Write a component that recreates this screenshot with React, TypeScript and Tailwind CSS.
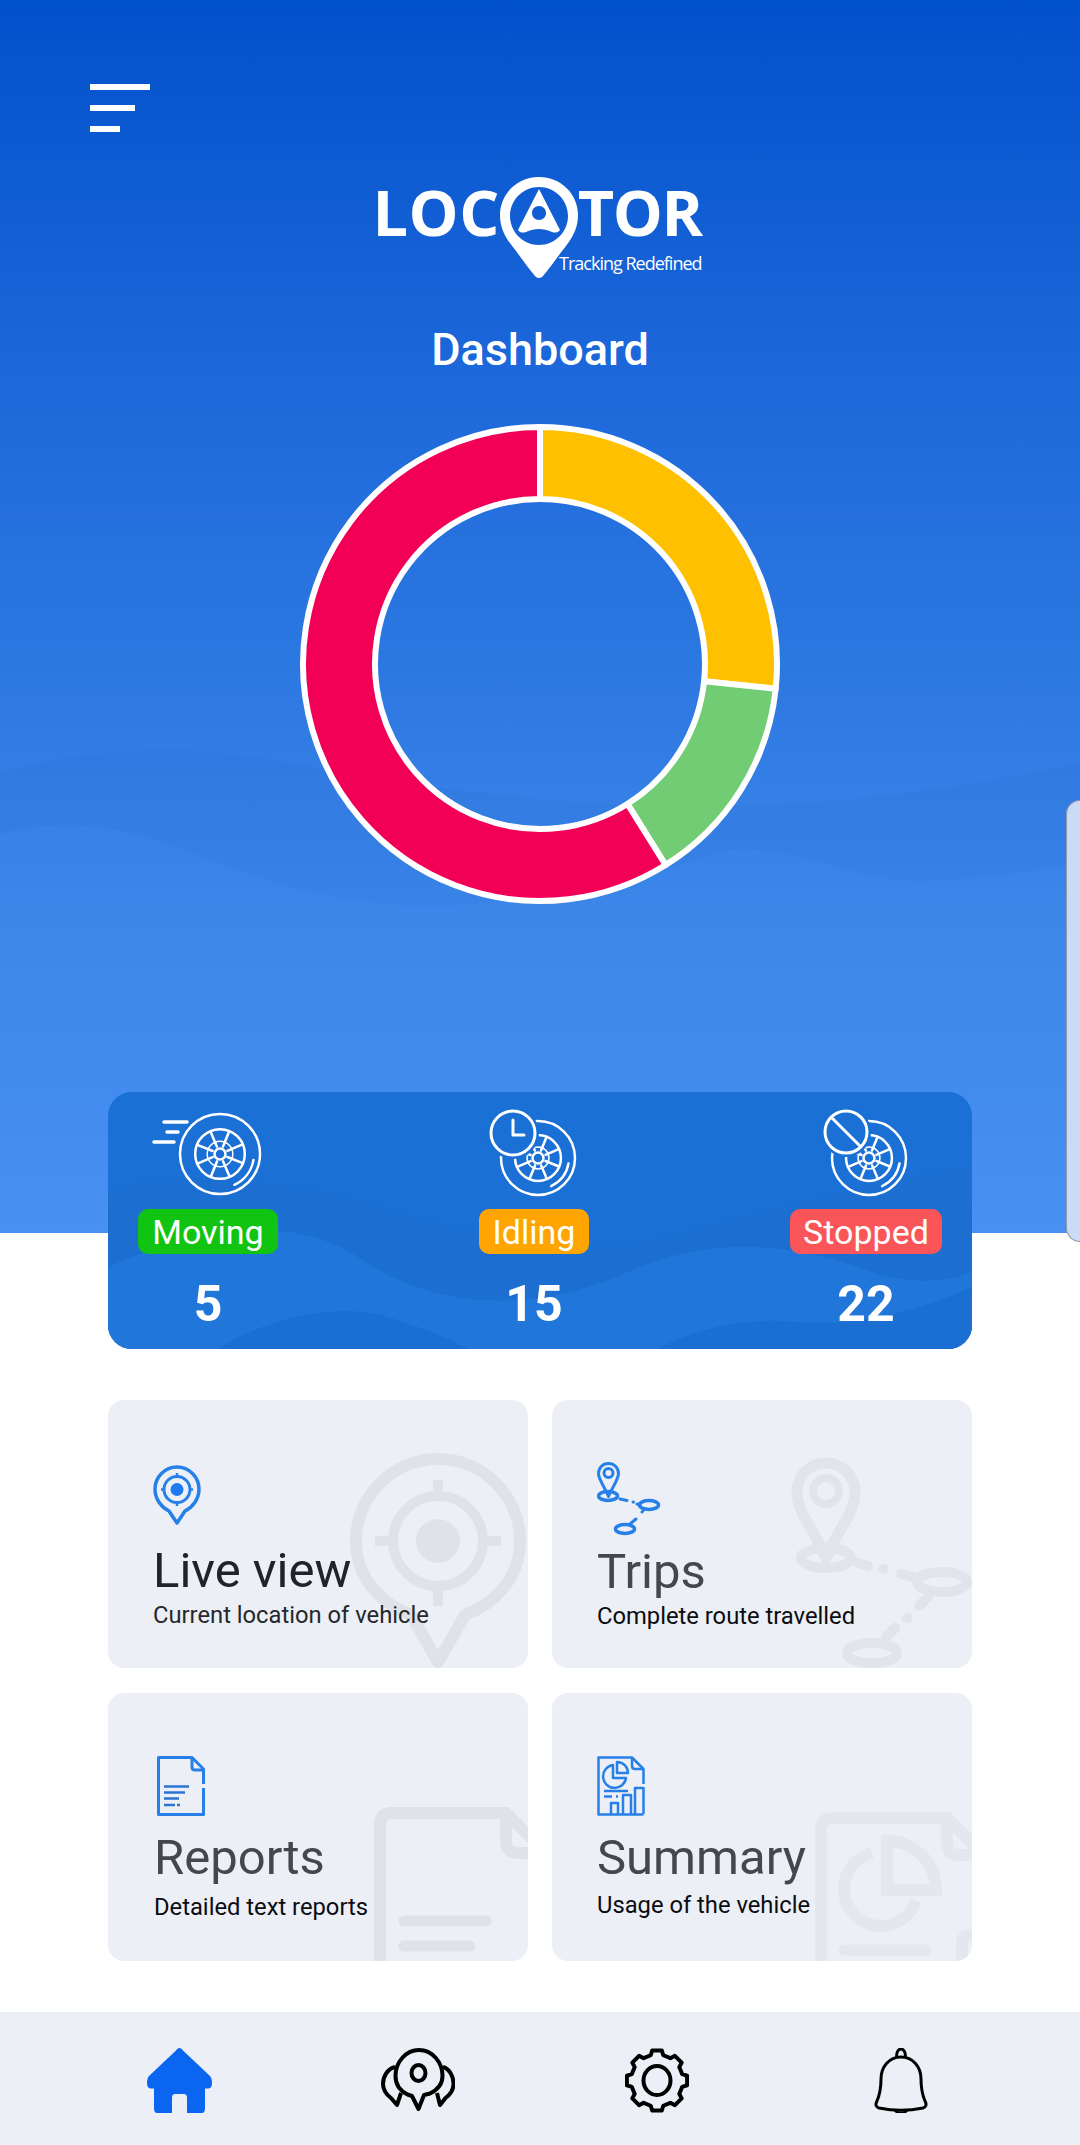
const wheelSpokes = [0, 45, 90, 135, 180, 225, 270, 315];

function polar(cx: number, cy: number, r: number, deg: number) {
  const a = ((deg - 90) * Math.PI) / 180;
  return `${cx + r * Math.cos(a)} ${cy + r * Math.sin(a)}`;
}

function arc(cx: number, cy: number, r: number, from: number, to: number) {
  const large = to - from > 180 ? 1 : 0;
  return `M${polar(cx, cy, r, from)}A${r} ${r} 0 ${large} 1 ${polar(cx, cy, r, to)}`;
}

function Wheel({ cx, cy, r }: { cx: number; cy: number; r: number }) {
  const rim = r * 0.62;
  return (
    <g fill="none" stroke="#fff" strokeWidth="2.5" strokeLinecap="round">
      <circle cx={cx} cy={cy} r={r} />
      <path d={arc(cx, cy, r - 6, 100, 155)} />
      <circle cx={cx} cy={cy} r={rim} />
      <circle cx={cx} cy={cy} r={5.5} />
      <circle cx={cx} cy={cy} r={rim - 12} strokeWidth="1.5" />
      {wheelSpokes.map((d) => (
        <path key={d} d={`M${polar(cx, cy, 8, d + 22)}L${polar(cx, cy, rim - 1, d + 22)}`} />
      ))}
    </g>
  );
}

function MovingIcon() {
  return (
    <svg viewBox="0 0 140 101" className="h-[101px] w-[140px] overflow-visible" aria-hidden="true">
      <Wheel cx={82} cy={46} r={40} />
      <path d="M26 14h23M29 24h11M16 34h20" fill="none" stroke="#fff" strokeWidth="3.5" strokeLinecap="round" />
    </svg>
  );
}

function IdlingIcon() {
  return (
    <svg viewBox="0 0 110 101" className="h-[101px] w-[110px] overflow-visible" aria-hidden="true">
      <Wheel cx={59} cy={50} r={37} />
      <circle cx={34} cy={25} r={26} fill="#1a70d4" />
      <circle cx={34} cy={25} r={22} fill="#1a70d4" stroke="#fff" strokeWidth="3" />
      <path d="M34 12v15h11" fill="none" stroke="#fff" strokeWidth="3" strokeLinecap="round" strokeLinejoin="round" />
    </svg>
  );
}

function StoppedIcon() {
  return (
    <svg viewBox="0 0 152 101" className="h-[101px] w-[152px] overflow-visible" aria-hidden="true">
      <Wheel cx={79} cy={50} r={37} />
      <circle cx={56} cy={24} r={25} fill="#1a70d4" />
      <circle cx={56} cy={24} r={21} fill="#1a70d4" stroke="#fff" strokeWidth="3" />
      <path d="M41 9l30 30" fill="none" stroke="#fff" strokeWidth="3" />
    </svg>
  );
}

function LogoPin() {
  return (
    <svg viewBox="0 0 78 101" className="h-[101px] w-[78px]" aria-hidden="true">
      <path
        fillRule="evenodd"
        fill="#fff"
        d="M39 0C17 0 0 17 0 38c0 15 7 25 16 36 6 8 13 18 19 25 2 2.500 6 2.500 8 0 6-7 13-17 19-25 9-11 16-21 16-36C78 17 61 0 39 0zM39 10c16 0 29 13 29 29S55 68 39 68 10 55 10 39 23 10 39 10z"
      />
      <path
        fillRule="evenodd"
        fill="#fff"
        d="M39 12 60 53c-2 3-5 3-8 2-4-2-9-3-13-3s-9 1-13 3c-3 1-6 1-8-2zM39 29c-4 0-7 3-7 7s3 7 7 7 7-3 7-7-3-7-7-7z"
      />
    </svg>
  );
}

function Donut() {
  const cx = 245;
  const cy = 245;
  const outer = 237;
  const inner = 165;
  const seg = (from: number, to: number) => {
    const large = to - from > 180 ? 1 : 0;
    return `M${polar(cx, cy, outer, from)}A${outer} ${outer} 0 ${large} 1 ${polar(cx, cy, outer, to)}L${polar(cx, cy, inner, to)}A${inner} ${inner} 0 ${large} 0 ${polar(cx, cy, inner, from)}Z`;
  };
  return (
    <svg viewBox="0 0 490 490" className="h-[490px] w-[490px]" aria-hidden="true">
      <g stroke="#fff" strokeWidth="6" strokeLinejoin="round">
        <path d={seg(0, 96)} fill="#ffc000" />
        <path d={seg(96, 148)} fill="#72cc74" />
        <path d={seg(148, 360)} fill="#f10056" />
      </g>
    </svg>
  );
}

function HeroWaves() {
  return (
    <svg viewBox="0 0 1080 1232" preserveAspectRatio="none" className="pointer-events-none absolute inset-0 h-full w-full" aria-hidden="true">
      <path
        d="M0 772C60 755 120 748 190 750 280 755 420 790 560 800 760 815 900 800 1080 762V860C1040 870 990 878 930 880 860 885 790 840 723 850 560 905 420 915 330 895 260 885 200 850 130 832 90 822 40 822 0 833Z"
        fill="#0a3fb0"
        fillOpacity="0.06"
      />
    </svg>
  );
}

function StatWaves() {
  return (
    <svg viewBox="0 0 864 257" preserveAspectRatio="none" className="pointer-events-none absolute inset-0 h-full w-full" aria-hidden="true">
      <path d="M0 100C60 80 130 85 210 100 290 118 400 160 500 155 580 150 640 115 864 75V257H0Z" fill="#1c6fd0" />
      <path d="M0 175C100 130 190 125 250 165 320 215 420 225 520 180 590 150 660 145 750 175 800 195 840 190 864 180V257H0Z" fill="#2176da" />
      <path d="M110 257C160 225 230 210 280 225 310 235 340 245 360 257ZM550 257C590 235 640 225 690 230 760 235 820 215 864 195V257Z" fill="#1b6ed2" />
    </svg>
  );
}

function LiveIcon() {
  return (
    <svg viewBox="0 0 48 60" className="h-[60px] w-[48px]" aria-hidden="true">
      <path d="M24 2C12 2 2 12 2 24c0 10 6 18 14 22l8 12 8-12c8-4 14-12 14-22C46 12 36 2 24 2z" fill="none" stroke="#2680e8" strokeWidth="3.500" strokeLinejoin="round" />
      <circle cx="24" cy="24.500" r="13" fill="none" stroke="#2680e8" strokeWidth="3" />
      <circle cx="24" cy="24.500" r="6.500" fill="#1f7af0" />
      <path d="M24 8v4M24 37v4M8 24.500h4M36 24.500h4" stroke="#2680e8" strokeWidth="2.500" />
    </svg>
  );
}

function TripsIcon() {
  return (
    <svg viewBox="0 0 64 74" className="h-[74px] w-[64px]" aria-hidden="true">
      <g fill="none" stroke="#2680e8" strokeWidth="3" strokeLinecap="round">
        <path d="M11.500 1.500C5.500 1.500 1.500 6 1.500 11.500c0 6 6.500 14 10 23 3.500-9 10-17 10-23C21.500 6 17.500 1.500 11.500 1.500z" strokeLinejoin="round" />
        <circle cx="11.500" cy="11" r="4.500" />
        <ellipse cx="11" cy="34" rx="9.500" ry="4.500" strokeWidth="3.500" />
        <path d="M23 37l7 1.500M36 40h.5M40 42l3 1" />
        <ellipse cx="52" cy="43" rx="9.500" ry="4.500" strokeWidth="3.500" />
        <path d="M46 49l-1 1M39 57l-6 5" />
        <ellipse cx="28" cy="67" rx="9.500" ry="4.500" strokeWidth="3.500" />
      </g>
    </svg>
  );
}

function ReportsIcon() {
  return (
    <svg viewBox="0 0 48 60" className="ml-[3px] h-[60px] w-[48px]" aria-hidden="true">
      <g fill="none" stroke="#2680e8" strokeWidth="3" strokeLinejoin="round">
        <path d="M46.500 32V58.500H1.500V1.500H35L46.500 13V28" />
        <path d="M35 1.500V11c0 2 1 3 3 3h8.500" />
      </g>
      <path d="M7 30.500h25M7 36.500h21M7 42.500h15M7 49h11M20 49h3" fill="none" stroke="#2b74d0" strokeWidth="2.500" />
    </svg>
  );
}

function SummaryIcon() {
  return (
    <svg viewBox="0 0 48 60" className="h-[60px] w-[48px]" aria-hidden="true">
      <g fill="none" stroke="#2680e8" strokeWidth="2.500" strokeLinejoin="round">
        <path d="M46.500 28V13L35 1.500H1.500V58.500H46.500" />
        <path d="M35 1.500V10c0 2 1 3 3 3h8.500" />
        <path d="M16 9A11.500 11.500 0 1 0 29 22H16Z" />
        <path d="M20 6A11 11 0 0 1 31 17H20Z" />
        <path d="M7 35h24M7 40.500h8M19 40.500h2" />
        <path d="M14 58V47h7v11M26 58V39h8v19M38 58V32h8.500v26" />
      </g>
    </svg>
  );
}

function LiveMark() {
  return (
    <svg viewBox="0 0 420 268" className="absolute inset-0 h-full w-full" aria-hidden="true">
      <g fill="none" stroke="#dfe2e8">
        <path d="M330 59c-45 0-82 37-82 82 0 36 24 62 55 74l27 47 27-47c31-12 55-38 55-74 0-45-37-82-82-82z" strokeWidth="12" strokeLinejoin="round" />
        <circle cx="330" cy="141" r="45" strokeWidth="10" />
        <path d="M330 80v18M330 186v20M267 141h20M373 141h20" strokeWidth="10" />
      </g>
      <circle cx="330" cy="141" r="22" fill="#dfe2e8" />
    </svg>
  );
}

function TripsMark() {
  return (
    <svg viewBox="0 0 420 268" className="absolute inset-0 h-full w-full" aria-hidden="true">
      <g fill="none" stroke="#e1e4ea" strokeWidth="10" strokeLinecap="round">
        <path d="M274 63c-17 0-29 14-29 29 0 23 20 40 29 67 9-27 29-44 29-67 0-15-12-29-29-29z" strokeLinejoin="round" strokeWidth="11" />
        <circle cx="274" cy="91" r="13" strokeWidth="8" />
        <ellipse cx="274" cy="158" rx="25" ry="10" />
        <path d="M306 163l10 3M331 169h.5M349 174l12 3" />
        <ellipse cx="390" cy="182" rx="25" ry="10" />
        <path d="M376 197l-9 9M355 218h.5M343 228l-9 9" />
        <ellipse cx="320" cy="253" rx="25" ry="10" />
      </g>
    </svg>
  );
}

function ReportsMark() {
  return (
    <svg viewBox="0 0 420 268" className="absolute inset-0 h-full w-full" aria-hidden="true">
      <g fill="none" stroke="#dfe2e8" strokeWidth="12">
        <path d="M272 280V132c0-8 4-12 12-12h114l30 30" />
        <path d="M398 120v28c0 8 4 12 12 12h14" />
      </g>
      <path d="M296 228h82M296 253h66" stroke="#dfe2e8" strokeWidth="11" strokeLinecap="round" />
    </svg>
  );
}

function SummaryMark() {
  return (
    <svg viewBox="0 0 420 268" className="absolute inset-0 h-full w-full" aria-hidden="true">
      <g fill="none" stroke="#e4e7ed" strokeWidth="12">
        <path d="M269 280V137c0-8 4-12 12-12h114l30 30" />
        <path d="M395 125v25c0 8 4 12 12 12h17" />
        <path d="M320 160A37 37 0 1 0 364 208" />
        <path d="M335 148A49 49 0 0 1 384 197H335Z" />
        <path d="M410 272V250c0-5 3-8 10-8" />
      </g>
      <path d="M292 257h82" stroke="#e4e7ed" strokeWidth="11" strokeLinecap="round" />
    </svg>
  );
}

function HomeIcon() {
  return (
    <svg viewBox="0 0 65 65" className="h-[65px] w-[65px]" aria-hidden="true">
      <path
        fill="#0a66f0"
        d="M32.500 0c1.500 0 2.500 1 3.500 2.500L63 28c1.500 2 2 4 2 7 0 3-1 5-3 5.500h-4V60c0 3-1 5-3 5H40V50c0-3-1-4-3-4h-9c-2 0-3 1-3 4v15H10c-2 0-3-2-3-5V40.500H3c-2-.5-3-2.500-3-5.500 0-3 .5-5 2-7L29 2.500C30 1 31 0 32.500 0z"
      />
    </svg>
  );
}

function RocketIcon() {
  return (
    <svg viewBox="0 0 74 63" className="h-[63px] w-[74px]" aria-hidden="true">
      <g fill="none" stroke="#000" strokeWidth="4" strokeLinejoin="round">
        <path d="M38 2C25 2 14.500 14 14.500 28c0 9 5 15 12 18.500L31 48l6.500 13L43 47l6-1.500c7-3.500 12.500-8.500 12.500-17.500C61.500 14 51 2 38 2z" />
        <path d="M14 19C6 21 2 29 2 36c0 6 4 11 8 14l6 7 4-12" />
        <path d="M62 19c7 2 10.500 10 10.500 17 0 6-4 11-8 14l-5.500 7-3-12" />
        <ellipse cx="37.500" cy="25" rx="7" ry="8" />
      </g>
    </svg>
  );
}

function GearIcon() {
  const pts: string[] = [];
  for (let i = 0; i < 8; i++) {
    const c = i * 45;
    pts.push(polar(32, 32.500, 26, c - 14), polar(32, 32.500, 30.500, c - 9), polar(32, 32.500, 30.500, c + 9), polar(32, 32.500, 26, c + 14));
  }
  return (
    <svg viewBox="0 0 64 65" className="h-[65px] w-[64px]" aria-hidden="true">
      <polygon points={pts.join(" ")} fill="none" stroke="#000" strokeWidth="4" strokeLinejoin="round" />
      <ellipse cx="32" cy="32.500" rx="13.500" ry="14.500" fill="none" stroke="#000" strokeWidth="4" />
    </svg>
  );
}

function BellIcon() {
  return (
    <svg viewBox="0 0 54 65" className="h-[65px] w-[54px]" aria-hidden="true">
      <g fill="none" stroke="#000" strokeWidth="3" strokeLinejoin="round">
        <path d="M27 9C15 9 7 19 7 31c0 9-1 15-4 22-2 4-1 6 2 7 14 3 30 3 44 0 3-1 4-3 2-7-3-7-4-13-4-22C47 19 39 9 27 9z" />
        <path d="M22.500 9c0-5 2-8 4.500-8s4.500 3 4.500 8" />
        <path d="M21 62l3 3h6l3-3" />
      </g>
    </svg>
  );
}

const stats = [
  { label: "Moving", value: "5", badge: "w-[140px] bg-[#11c411]", icon: <MovingIcon /> },
  { label: "Idling", value: "15", badge: "w-[110px] bg-[#ffa400]", icon: <IdlingIcon /> },
  { label: "Stopped", value: "22", badge: "w-[152px] bg-[#fa5558]", icon: <StoppedIcon /> },
];

const cards = [
  {
    title: "Live view",
    sub: "Current location of vehicle",
    box: "pl-[45px] pt-[65px]",
    head: "mt-[22px] text-[#212327]",
    line: "mt-[8px] text-[#26282c]",
    icon: <LiveIcon />,
    mark: <LiveMark />,
  },
  {
    title: "Trips",
    sub: "Complete route travelled",
    box: "pl-[45px] pt-[62px]",
    head: "mt-[12px] text-[#45474b]",
    line: "mt-[8px] text-[#0b0c10]",
    icon: <TripsIcon />,
    mark: <TripsMark />,
  },
  {
    title: "Reports",
    sub: "Detailed text reports",
    box: "pl-[46px] pt-[63px]",
    head: "mt-[18px] text-[#45474b]",
    line: "mt-[13px] text-[#0b0c10]",
    icon: <ReportsIcon />,
    mark: <ReportsMark />,
  },
  {
    title: "Summary",
    sub: "Usage of the vehicle",
    box: "pl-[45px] pt-[63px]",
    head: "mt-[18px] text-[#45474b]",
    line: "mt-[11px] text-[#0b0c10]",
    icon: <SummaryIcon />,
    mark: <SummaryMark />,
  },
];

export default function App() {
  return (
    <div className="relative flex h-[2145px] w-[1080px] flex-col overflow-hidden bg-white font-['Roboto',sans-serif]">
      <section className="relative bg-[linear-gradient(180deg,#0251cc_0%,#1f6adb_33%,#2c78e1_54%,#3c86ea_73%,#4890f2_100%)] px-[108px] pt-[84px]">
        <HeroWaves />

        <div className="relative -ml-[18px] flex w-[60px] flex-col gap-[15px]">
          <span className="h-[6px] w-[60px] bg-white" />
          <span className="h-[6px] w-[45px] bg-white" />
          <span className="h-[6px] w-[30px] bg-white" />
        </div>

        <div className="relative mt-[45px] flex h-[101px] items-start justify-center">
          <div className="relative -left-[3px] flex items-start font-['Open_Sans',sans-serif] text-[63px] leading-[62px] font-bold text-white">
            <span className="mt-[4px] tracking-[0.5px]">LOC</span>
            <LogoPin />
            <span className="mt-[4px] tracking-[-1.5px]">TOR</span>
            <span className="absolute top-[75px] right-0 text-[18px] leading-[22px] font-normal tracking-[-1px]">Tracking Redefined</span>
          </div>
        </div>

        <h1 className="relative mt-[46px] text-center text-[45px] leading-[52px] font-medium text-white">Dashboard</h1>

        <div className="relative mt-[43px] flex justify-center">
          <Donut />
        </div>

        <div className="relative mt-[183px] -mb-[116px] h-[257px] overflow-hidden rounded-[24px] bg-[#1a70d4]">
          <StatWaves />
          <div className="relative flex justify-between px-[30px] pt-[16px]">
            {stats.map((s) => (
              <div key={s.label} className="flex flex-col items-center">
                {s.icon}
                <span className={`flex h-[45px] items-center justify-center rounded-[10px] text-[34px] leading-none text-white ${s.badge}`}>{s.label}</span>
                <span className="mt-[22px] text-[50px] leading-[56px] font-bold text-white">{s.value}</span>
              </div>
            ))}
          </div>
        </div>
      </section>

      <div className="relative mt-[167px] grid grid-cols-2 gap-x-[24px] gap-y-[25px] px-[108px]">
        {cards.map((c) => (
          <div key={c.title} className={`relative h-[268px] overflow-hidden rounded-[16px] bg-[#eceff5] ${c.box}`}>
            {c.mark}
            <div className="relative">
              {c.icon}
              <h2 className={`text-[49px] leading-[48px] font-normal ${c.head}`}>{c.title}</h2>
              <p className={`text-[23.75px] leading-[24px] ${c.line}`}>{c.sub}</p>
            </div>
          </div>
        ))}
      </div>

      <nav className="mt-[51px] flex h-[133px] items-start bg-[#eceff5] pt-[36px] pl-[147px]">
        <HomeIcon />
        <span className="ml-[169px]"><RocketIcon /></span>
        <span className="ml-[170px]"><GearIcon /></span>
        <span className="ml-[185px]"><BellIcon /></span>
      </nav>

      <div className="absolute top-[800px] right-0 h-[442px] w-[14px] rounded-l-[14px] border-y border-l border-[#8f9aa8] bg-[#c9dbf6]" />
    </div>
  );
}
